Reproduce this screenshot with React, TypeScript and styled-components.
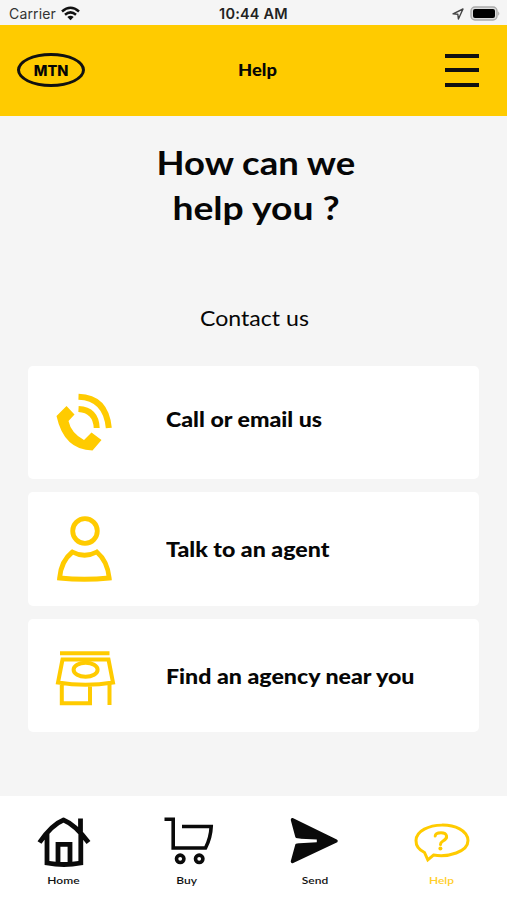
import React from "react";
import styled, { createGlobalStyle } from "styled-components";

const yellow = "#ffcb00";

const GlobalStyle = createGlobalStyle`
  * { box-sizing: border-box; }
  body { margin: 0; background: #f5f5f5; }
`;

const Screen = styled.div`
  display: flex;
  flex-direction: column;
  width: 507px;
  height: 900px;
  overflow: hidden;
  background: #f5f5f5;
  color: #060606;
  font-family: Lato, "Open Sans", sans-serif;
`;

const StatusBar = styled.div`
  display: grid;
  grid-template-columns: 1fr auto 1fr;
  align-items: center;
  flex: none;
  height: 25px;
  padding: 2px 6px 0;
  font: 500 14px/20px Inter, sans-serif;
`;

const Carrier = styled.div`
  display: flex;
  align-items: center;
  gap: 5px;
  padding-left: 3px;
  color: #333;
  font-weight: 400;
  letter-spacing: 0.15px;
`;

const Clock = styled.div`
  font-weight: 600;
  font-size: 14.5px;
  letter-spacing: 0.2px;
  color: #222;
`;

const StatusRight = styled.div`
  display: flex;
  justify-content: flex-end;
  align-items: center;
  gap: 6px;
`;

const Header = styled.header`
  display: grid;
  grid-template-columns: 1fr auto 1fr;
  align-items: center;
  flex: none;
  height: 90.5px;
  padding: 0 27px 0 17px;
  background: ${yellow};
`;

const Label = styled.span<{
  $size: number;
  $weight?: number;
  $stretch?: number;
  $origin?: string;
}>`
  display: inline-block;
  font-size: ${(p) => p.$size}px;
  font-weight: ${(p) => p.$weight ?? 400};
  white-space: nowrap;
  transform: scaleX(${(p) => p.$stretch ?? 1});
  transform-origin: ${(p) => p.$origin ?? "center"};
`;

const Title = styled(Label)`
  margin-left: 17px;
`;

const Logo = styled.div`
  display: grid;
  place-items: center;
  width: 68px;
  height: 34px;
  padding-top: 1px;
  border: 3px solid #111;
  border-radius: 50%;
  font: 800 14.5px/26px Inter, sans-serif;
`;

const MenuButton = styled.button`
  justify-self: end;
  display: flex;
  flex-direction: column;
  justify-content: space-between;
  width: 35px;
  height: 33px;
  padding: 0;
  border: 0;
  background: none;
`;

const MenuLine = styled.span`
  display: block;
  height: 4px;
  width: 34px;
  background: #111;
`;

const Main = styled.main`
  flex: 1;
  padding: 24px 28px 0;
`;

const Heading = styled.h1`
  margin: 0 0 0 5px;
  text-align: center;
  font-size: 33px;
  font-weight: 700;
  line-height: 45px;
`;

const Subheading = styled.h2`
  margin: 72px 0 0 2px;
  text-align: center;
  font-weight: 400;
  line-height: 30px;
`;

const CardList = styled.div`
  display: flex;
  flex-direction: column;
  gap: 13.5px;
  margin-top: 33px;
`;

const Card = styled.button<{ $shift: number }>`
  display: grid;
  grid-template-columns: 138px 1fr;
  align-items: center;
  height: 113.3px;
  padding: 0;
  border: 0;
  border-radius: 5px;
  background: #fff;
  color: inherit;
  font-family: inherit;
  text-align: left;
  & > span { padding-bottom: ${(p) => p.$shift}px; }
`;

const IconBox = styled.div`
  display: flex;
  padding-left: 22px;
`;

const TabBar = styled.nav`
  display: grid;
  grid-template-columns: 126px 122px 134px 118px;
  flex: none;
  height: 104px;
  background: #fff;
`;

const Tab = styled.a<{ $active?: boolean }>`
  display: flex;
  flex-direction: column;
  align-items: center;
  padding-top: 16px;
  gap: 4px;
  line-height: 16px;
  color: ${(p) => (p.$active ? "#ffce29" : "#111")};
`;

const Wifi = () => (
  <svg width="19" height="15" viewBox="0 0 19 15" fill="none" stroke="#111" strokeWidth="2.5">
    <path d="M1 5.5Q9.5-2 18 5.5M4 8.7Q9.5 4 15 8.7" />
    <path d="M6.3 11Q9.5 8.6 12.7 11L9.5 14.2Z" fill="#111" stroke="none" />
  </svg>
);

const Location = () => (
  <svg width="12" height="12" viewBox="0 0 12 12" fill="none" stroke="#444" strokeWidth="1.4" strokeLinejoin="round">
    <path d="M1 5.9L11 1L6.4 11L5.8 6.2Z" />
  </svg>
);

const Battery = () => (
  <svg width="31" height="15" viewBox="0 0 31 15">
    <rect x="1" y="1" width="26" height="13" rx="4" fill="#ddd" stroke="#aaa" strokeWidth="1.4" />
    <rect x="3" y="3" width="22" height="9" rx="2" fill="#000" />
    <path d="M28.2 5.2Q30.5 7.5 28.2 9.8Z" fill="#aaa" />
  </svg>
);

const Phone = () => (
  <svg width="70" height="80" viewBox="50 382 70 80">
    <path d="M66.5 406L74.5 414.5L68.5 421Q71 433 84 440L91.5 432.5L101.5 440L92.5 450.5Q64 450 56.5 416Z" fill={yellow} />
    <path d="M78.5 396.7Q106 397.5 108.8 428M78.5 409Q96 410 96.7 428" fill="none" stroke={yellow} strokeWidth="6" />
  </svg>
);

const Agent = () => (
  <svg width="70" height="80" viewBox="50 508 70 80" fill="none" stroke={yellow} strokeWidth="4.8">
    <circle cx="85" cy="530" r="12.3" />
    <path d="M72.4 551Q84.5 557.5 96.8 551Q107.5 560 109.2 577Q84.5 579.5 59.6 577Q61 560 72.4 551Z" />
  </svg>
);

const Store = () => (
  <svg width="70" height="80" viewBox="50 635 70 80" fill="none" stroke={yellow} strokeWidth="4">
    <path d="M60 652.3H109.5M62.5 658.5H108.5L113 681.5Q85.5 686.2 58 681.5ZM61.8 682V702.3H90V684M109.5 682V704" />
    <ellipse cx="85.6" cy="668.7" rx="12" ry="7" />
  </svg>
);

const Home = () => (
  <svg width="60" height="56" viewBox="33 812 60 56" fill="none" stroke="#0a0a0a" strokeWidth="4.8">
    <path d="M39.5 842.5Q52 824.5 63.5 820Q75 824.5 88.5 842.5M80.5 833V818.5M47 832V863Q64 866 80.8 863V832M58 864V844.3H70V864" />
  </svg>
);

const Cart = () => (
  <svg width="60" height="56" viewBox="157 812 60 56" fill="none" stroke="#0a0a0a" strokeWidth="3.6">
    <path d="M164.5 819.3H173.2V848H205.5Q210.7 838 211.2 826.5H182" />
    <circle cx="180.2" cy="858.8" r="3.7" />
    <circle cx="199.2" cy="858.8" r="3.7" />
  </svg>
);

const Send = () => (
  <svg width="60" height="56" viewBox="285 812 60 56">
    <path d="M292.5 819.8L336 841L292.5 861.5L297 845L316 842.2V839.5L297 836.5Z" fill="#0a0a0a" stroke="#0a0a0a" strokeWidth="3.5" strokeLinejoin="round" />
    <path d="M295 838.5L316.8 839.6V842.2L295 843.6Z" fill="#fff" />
  </svg>
);

const Question = () => (
  <svg width="60" height="56" viewBox="411 812 60 56" fill="none" stroke={yellow}>
    <path d="M424.5 852.5Q415.8 848.2 416 840.5C416.8 820.5 467 819.5 468 840.5C468 852 448 857.5 433.5 855L427.8 859.8Z" strokeWidth="3" />
    <path d="M435.2 836Q435.4 832.7 441 832.7C447.5 832.7 448.5 838.2 443 841Q440.5 842.5 440.5 844.5" strokeWidth="3" strokeLinecap="round" />
    <circle cx="440.4" cy="848.4" r="2" fill={yellow} stroke="none" />
  </svg>
);

const contacts = [
  { text: "Call or email us", Icon: Phone, shift: 6 },
  { text: "Talk to an agent", Icon: Agent, shift: 0 },
  { text: "Find an agency near you", Icon: Store, shift: 0 },
];

const tabs = [
  { text: "Home", Icon: Home },
  { text: "Buy", Icon: Cart },
  { text: "Send", Icon: Send },
  { text: "Help", Icon: Question, active: true },
];

export default function App() {
  return (
    <Screen>
      <GlobalStyle />
      <StatusBar>
        <Carrier>Carrier <Wifi /></Carrier>
        <Clock>10:44 AM</Clock>
        <StatusRight><Location /><Battery /></StatusRight>
      </StatusBar>
      <Header>
        <Logo>MTN</Logo>
        <Title $size={16.5} $weight={900} $stretch={1.11}>Help</Title>
        <MenuButton aria-label="Menu"><MenuLine /><MenuLine /><MenuLine /></MenuButton>
      </Header>
      <Main>
        <Heading>
          <Label $size={33} $weight={700} $stretch={1.105}>How can we</Label><br />
          <Label $size={33} $weight={700} $stretch={1.13}>help you ?</Label>
        </Heading>
        <Subheading><Label $size={21} $stretch={1.1}>Contact us</Label></Subheading>
        <CardList>
          {contacts.map(({ text, Icon, shift }) => (
            <Card key={text} $shift={shift}>
              <IconBox><Icon /></IconBox>
              <Label $size={20} $weight={900} $stretch={1.158} $origin="left">{text}</Label>
            </Card>
          ))}
        </CardList>
      </Main>
      <TabBar>
        {tabs.map(({ text, Icon, active }) => (
          <Tab key={text} $active={active}>
            <Icon />
            <Label $size={10} $weight={600} $stretch={1.2}>{text}</Label>
          </Tab>
        ))}
      </TabBar>
    </Screen>
  );
}
